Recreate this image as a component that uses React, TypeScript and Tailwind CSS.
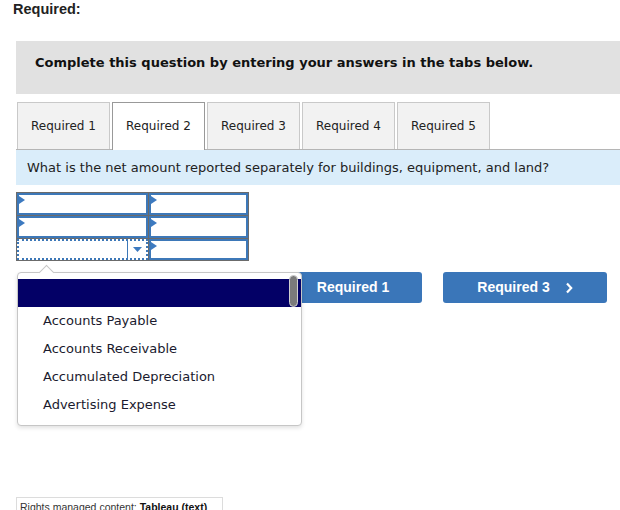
import React from "react";

const Flag = () => (
  <svg className="absolute left-0 top-[1px]" width="6" height="8" viewBox="0 0 6 8">
    <polygon points="0,0 6,4 0,8" fill="#3d7ac0" />
  </svg>
);

const Cell = ({ h }: { h: string }) => (
  <div className={`relative bg-white border-2 border-[#3d78b8] ${h}`}>
    <Flag />
  </div>
);

export default function App() {
  const verdana = { fontFamily: '"DejaVu Sans", Verdana, sans-serif' };
  const arial = { fontFamily: '"Liberation Sans", Arial, sans-serif' };
  const tabs = ["Required 1", "Required 2", "Required 3", "Required 4", "Required 5"];
  const items = ["Accounts Payable", "Accounts Receivable", "Accumulated Depreciation", "Advertising Expense"];
  return (
    <div className="relative w-[620px] h-[510px] overflow-hidden bg-white" style={arial}>
      <div className="pl-[13px] pt-[1px] text-[14.5px] leading-[16px] font-bold text-[#222]">Required:</div>

      <div className="ml-[16px] mt-[24px]">
        <div className="h-[53px] bg-[#e1e1e1] pl-[19px] pt-[14px]">
          <div className="text-[13px] leading-[16px] font-bold text-[#111]" style={verdana}>
            Complete this question by entering your answers in the tabs below.
          </div>
        </div>

        <div className="mt-[8px] flex gap-[2px] pl-[1px] border-b border-[#b5b5b5] h-[48px]" style={verdana}>
          {tabs.map((t, i) => (
            <div
              key={t}
              className={
                i === 1
                  ? "w-[93px] h-[48px] -mb-px pb-px bg-white border border-b-0 border-[#999] flex items-center justify-center text-[12px] text-[#222]"
                  : "w-[93px] h-[47px] bg-[#f2f2f2] border border-b-0 border-[#c9c9c9] flex items-center justify-center text-[12px] text-[#222]"
              }
            >
              {t}
            </div>
          ))}
        </div>

        <div className="h-[35px] bg-[#daedfa] pl-[11px] flex items-center text-[13px] text-[#222]" style={verdana}>
          What is the net amount reported separately for buildings, equipment, and land?
        </div>

        <div className="mt-[7px] w-[233px] grid grid-cols-[131px_99px] gap-px p-px bg-[#6b6b6b]">
          <Cell h="h-[22px]" />
          <Cell h="h-[22px]" />
          <Cell h="h-[22px]" />
          <Cell h="h-[22px]" />
          <div className="relative bg-white h-[21px] border-2 border-dotted border-[#3d78b8] flex">
            <div className="flex-1" />
            <div className="w-[19px] border-l border-[#3d78b8] flex items-center justify-center">
              <svg width="9" height="5" viewBox="0 0 9 5">
                <polygon points="0,0 9,0 4.5,5" fill="#3d7ac0" />
              </svg>
            </div>
          </div>
          <Cell h="h-[21px]" />
        </div>
      </div>

      <div className="mt-[11px] flex justify-end gap-[21px] pr-[13px]">
        <div className="w-[164px] h-[31px] rounded-[3px] bg-[#3a76b9] text-white font-bold text-[14px] flex items-center justify-center gap-[18px]">
          <svg width="8" height="12" viewBox="0 0 8 12">
            <polyline points="6,1.5 1.8,6 6,10.5" fill="none" stroke="white" strokeWidth="2.2" />
          </svg>
          <span>Required 1</span>
        </div>
        <div className="w-[164px] h-[31px] rounded-[3px] bg-[#3a76b9] text-white font-bold text-[14px] flex items-center justify-center gap-[15px]">
          <span>Required 3</span>
          <svg width="8" height="12" viewBox="0 0 8 12">
            <polyline points="2,1.5 6.2,6 2,10.5" fill="none" stroke="white" strokeWidth="2.2" />
          </svg>
        </div>
      </div>

      <div className="ml-[16px] mt-[194px] w-[207px] h-[20px] border border-[#dcdcdc] pl-[3px] pt-[3px] text-[10.5px] leading-[12px] text-[#333] whitespace-nowrap">
        Rights managed content: <span className="font-bold text-[#111]">Tableau (text)</span>
      </div>

      <div className="absolute left-[17px] top-[272px] w-[285px] h-[154px] bg-white border border-[#c6c6c6] rounded-[4px] shadow-[0_2px_4px_rgba(0,0,0,0.12)]">
        <div className="absolute left-[23px] -top-[6px] w-[11px] h-[11px] rotate-45 bg-white border-l border-t border-[#c6c6c6]" />
        <div className="relative mt-[6px] h-[28px] bg-[#030066]" />
        <div className="absolute right-[3px] top-[2px] w-[9px] h-[32px] rounded-full bg-[#7b7b7b] border border-[#d0d0d0]" />
        <div style={verdana}>
          {items.map((it) => (
            <div key={it} className="h-[28px] pl-[25px] flex items-center text-[13px] text-[#1a1a2e]">
              {it}
            </div>
          ))}
        </div>
      </div>
    </div>
  );
}
